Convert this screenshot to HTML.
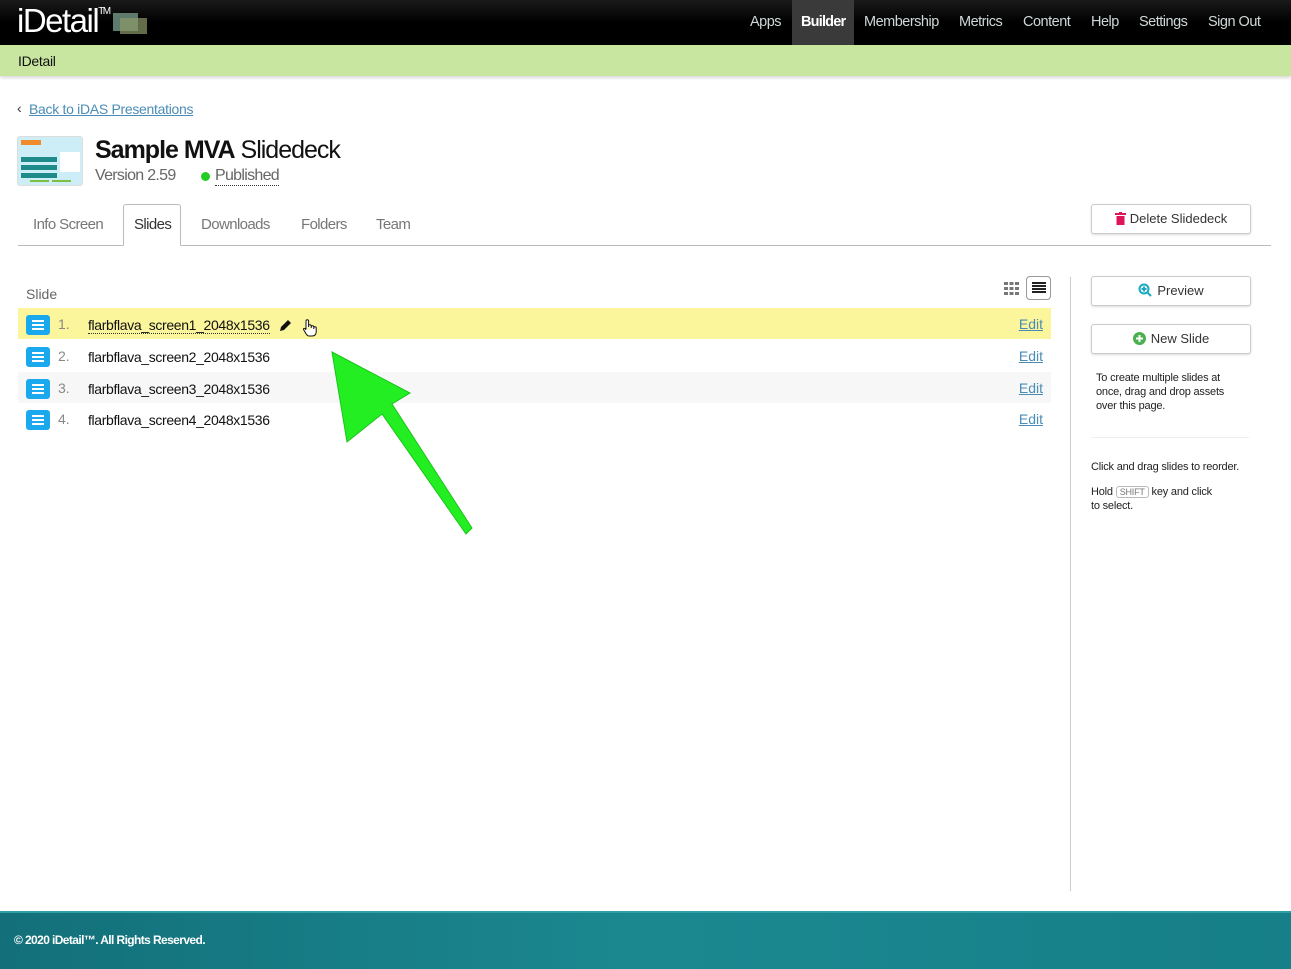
<!DOCTYPE html>
<html><head><meta charset="utf-8"><style>
*{box-sizing:border-box;margin:0;padding:0}
body{width:1291px;height:969px;overflow:hidden;background:#fff;font-family:"Liberation Sans",Helvetica,Arial,sans-serif;color:#222;position:relative}
.a{position:absolute}
.top{left:0;top:0;width:1291px;height:45px;background:linear-gradient(#1a1a1a,#000 50%,#000)}
.nav span{position:absolute;top:14px;font-size:14.5px;color:#cfd8d8;letter-spacing:-.5px}
.sub{left:0;top:45px;width:1291px;height:31px;background:#c8e6a0;box-shadow:0 2px 3px rgba(0,0,0,.15)}
a{color:#4a8cb5;text-decoration:underline}
.tab{position:absolute;top:216px;font-size:15px;color:#777;letter-spacing:-.6px}
.row{left:18px;width:1033px;height:31px}
.ic{position:absolute;left:8px;top:7px;width:24px;height:20px;background:#1aa8ee;border-radius:3px}
.ic i{position:absolute;left:6px;width:12px;height:2px;background:#fff}
.num{position:absolute;left:40px;top:8px;font-size:14px;color:#888}
.nm{position:absolute;left:70px;top:9px;font-size:14px;color:#111;letter-spacing:-.35px}
.ed{position:absolute;right:8px;top:8px;font-size:14px;color:#4a8cb5;text-decoration:underline}
.btn{position:absolute;border:1px solid #ccc;border-radius:3px;background:#fff;box-shadow:0 1px 2px rgba(0,0,0,.15);font-size:13px;color:#333;text-align:center}
.sm{font-size:11px;color:#222;line-height:14px;letter-spacing:-.2px}
</style></head><body>
<div class="a top"></div>
<div class="a" style="left:17px;top:2px;font-size:33px;color:#fff;letter-spacing:-1.5px">iDetail<sup style="font-size:10px;vertical-align:18px">TM</sup></div>
<div class="a" style="left:113px;top:13px;width:25px;height:18px;background:#6f8f80;opacity:.85"></div>
<div class="a" style="left:120px;top:18px;width:27px;height:16px;background:#8b9a6a;opacity:.7"></div>
<div class="a" style="left:792px;top:0;width:62px;height:45px;background:#3a3a3a"></div>
<div class="nav">
<span style="left:750px">Apps</span><span style="left:801px;color:#fff;font-weight:bold;letter-spacing:-.8px">Builder</span><span style="left:864px">Membership</span><span style="left:959px">Metrics</span><span style="left:1023px">Content</span><span style="left:1091px">Help</span><span style="left:1139px">Settings</span><span style="left:1208px">Sign Out</span></div>
<div class="a sub"></div>
<div class="a" style="left:18px;top:53px;font-size:14px;color:#111;letter-spacing:-.3px">IDetail</div>
<div class="a" style="left:17px;top:100px;font-size:14px;color:#333">‹</div>
<div class="a" style="left:29px;top:101px;font-size:14px;letter-spacing:-.3px"><a>Back to iDAS Presentations</a></div>
<div class="a" style="left:17px;top:136px;width:66px;height:50px;background:#cdeef7;border:1px solid #ddd;border-radius:3px">
<div class="a" style="left:3px;top:3px;width:20px;height:5px;background:#f08a2a"></div>
<div class="a" style="left:3px;top:20px;width:36px;height:5px;background:#1f8a8a"></div>
<div class="a" style="left:3px;top:28px;width:36px;height:5px;background:#1f8a8a"></div>
<div class="a" style="left:3px;top:36px;width:36px;height:5px;background:#1f8a8a"></div>
<div class="a" style="left:42px;top:15px;width:20px;height:20px;background:#fff"></div>
<div class="a" style="left:12px;top:43px;width:19px;height:2px;background:#7bc043"></div>
<div class="a" style="left:34px;top:43px;width:19px;height:2px;background:#7bc043"></div></div>
<div class="a" style="left:95px;top:136px;font-size:25px;color:#111;letter-spacing:-1px"><b>Sample MVA</b> Slidedeck</div>
<div class="a" style="left:95px;top:167px;font-size:16px;color:#666;letter-spacing:-.7px">Version 2.59</div>
<div class="a" style="left:201px;top:172px;width:9px;height:9px;border-radius:50%;background:#22cc22"></div>
<div class="a" style="left:215px;top:167px;font-size:16px;color:#666;letter-spacing:-.7px;border-bottom:1px dotted #333">Published</div>
<div class="a" style="left:18px;top:245px;width:1253px;height:1px;background:#bbb"></div>
<div class="a" style="left:123px;top:204px;width:58px;height:42px;border:1px solid #bbb;border-bottom:1px solid #fff;background:#fff;border-radius:3px 3px 0 0"></div>
<span class="tab" style="left:33px">Info Screen</span><span class="tab" style="left:134px;color:#333">Slides</span><span class="tab" style="left:201px">Downloads</span><span class="tab" style="left:301px">Folders</span><span class="tab" style="left:376px">Team</span>
<div class="btn" style="left:1091px;top:204px;width:160px;height:30px;line-height:28px"><svg width="11" height="13" style="vertical-align:-2px;margin-right:4px"><rect x="0" y="1" width="11" height="2" fill="#e0145a"/><rect x="4" y="0" width="3" height="2" fill="#e0145a"/><rect x="1.5" y="4" width="8" height="9" fill="#e0145a"/></svg>Delete Slidedeck</div>
<div class="a" style="left:26px;top:286px;font-size:14px;color:#666">Slide</div>
<div class="a" style="left:1004px;top:282px;width:15px;height:13px;background:repeating-linear-gradient(90deg,#777 0 4px,transparent 4px 5.5px)"><div style="position:absolute;left:0;top:3px;width:15px;height:1.5px;background:#fff"></div><div style="position:absolute;left:0;top:8px;width:15px;height:1.5px;background:#fff"></div></div>
<div class="a" style="left:1026px;top:276px;width:25px;height:24px;border:1px solid #999;border-radius:4px;background:#fff"><div class="a" style="left:5px;top:5px;width:14px;height:12px;background:repeating-linear-gradient(#222 0 2px,transparent 2px 3px)"></div></div>
<div class="a row" style="top:308px;background:#fbf59c"><div class="ic"><i style="top:5px"></i><i style="top:9px"></i><i style="top:13px"></i></div><span class="num">1.</span><span class="nm" style="border-bottom:1px dotted #333">flarbflava_screen1_2048x1536</span><svg class="a" style="left:261px;top:11px" width="13" height="13"><path d="M1 12 L2 8 L9 1 L12 4 L5 11 Z" fill="#111"/></svg><svg class="a" style="left:284px;top:11px" width="15" height="18"><path d="M4 10 V2 a1.3 1.3 0 0 1 2.6 0 V8 M6.6 7 a1.3 1.3 0 0 1 2.6 0 V9 M9.2 8 a1.3 1.3 0 0 1 2.6 0 V10 M11.8 9 a1.2 1.2 0 0 1 2.4 0 V13 Q14 17 10 17 H7 Q5 17 3 13 L1.5 10.5 Q1.2 9 3 9.5 L4 11" fill="#fff" stroke="#111" stroke-width="1"/></svg><span class="ed">Edit</span></div>
<div class="a row" style="top:340px"><div class="ic"><i style="top:5px"></i><i style="top:9px"></i><i style="top:13px"></i></div><span class="num">2.</span><span class="nm">flarbflava_screen2_2048x1536</span><span class="ed">Edit</span></div>
<div class="a row" style="top:372px;background:#f7f7f7"><div class="ic"><i style="top:5px"></i><i style="top:9px"></i><i style="top:13px"></i></div><span class="num">3.</span><span class="nm">flarbflava_screen3_2048x1536</span><span class="ed">Edit</span></div>
<div class="a row" style="top:403px"><div class="ic"><i style="top:5px"></i><i style="top:9px"></i><i style="top:13px"></i></div><span class="num">4.</span><span class="nm">flarbflava_screen4_2048x1536</span><span class="ed">Edit</span></div>
<svg class="a" style="left:0;top:0" width="1291" height="969"><polygon points="332,352 410,393 392,404 472,528 466,534 382,414 347,442" fill="#22ee22" stroke="#1bc41b" stroke-width="1"/></svg>
<div class="a" style="left:1070px;top:277px;width:1px;height:614px;background:#ccc"></div>
<div class="btn" style="left:1091px;top:276px;width:160px;height:30px;line-height:28px"><svg width="14" height="14" style="vertical-align:-2px;margin-right:5px"><circle cx="6" cy="6" r="4.5" fill="none" stroke="#18a9c0" stroke-width="2"/><path d="M9 9 L13 13 M6 3.5 V8.5 M3.5 6 H8.5" stroke="#18a9c0" stroke-width="2"/></svg>Preview</div>
<div class="btn" style="left:1091px;top:324px;width:160px;height:30px;line-height:28px"><svg width="13" height="13" style="vertical-align:-2px;margin-right:5px"><circle cx="6.5" cy="6.5" r="6.5" fill="#4caf50"/><path d="M6.5 3 V10 M3 6.5 H10" stroke="#fff" stroke-width="2"/></svg>New Slide</div>
<div class="a sm" style="left:1096px;top:371px;width:140px">To create multiple slides at once, drag and drop assets over this page.</div>
<div class="a" style="left:1091px;top:437px;width:158px;height:1px;background:#eee"></div>
<div class="a sm" style="left:1091px;top:460px">Click and drag slides to reorder.</div>
<div class="a sm" style="left:1091px;top:485px">Hold <span style="border:1px solid #bbb;border-radius:3px;padding:0 3px;font-size:9px;color:#777">SHIFT</span> key and click<br>to select.</div>
<div class="a" style="left:0;top:911px;width:1291px;height:58px;background:linear-gradient(90deg,#13707a,#1b8890 50%,#167f88);border-top:2px solid #2aa0a6"></div>
<div class="a" style="left:14px;top:933px;font-size:12px;font-weight:bold;color:#fff;letter-spacing:-.6px">© 2020 iDetail™.  All Rights Reserved.</div>
</body></html>
